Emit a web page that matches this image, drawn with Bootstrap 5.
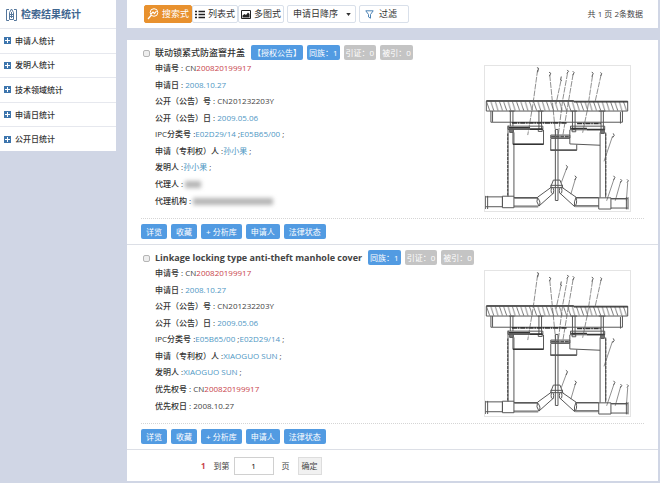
<!DOCTYPE html>
<html lang="zh-CN">
<head>
<meta charset="utf-8">
<meta name="viewport" content="width=device-width, initial-scale=1">
<title>检索结果统计</title>
<link href="https://cdn.jsdelivr.net/npm/bootstrap@5.3.0/dist/css/bootstrap.min.css" rel="stylesheet">
<style>
  body { background: #d0d6e5; color: #444; font: 8px/16px "Open Sans", "Noto Sans CJK SC", sans-serif; }
  a { color: #4f97c4; text-decoration: none; }
  .sidebar { width: 116px; }
  .sidebar-head { height: 28px; font-size: 10px; line-height: 16px; color: #3f6690; padding-left: 6px; gap: 4px; }
  .stat-list { min-height: 123px; }
  .stat-list li { border-top: 1px solid #e6e8ee; }
  .stat-list a { color: #333; padding-left: 4px; gap: 4px; font-weight: 500; }
  .main-col { padding: 0 2px 0 11px; min-width: 0; }
  .toolbar { height: 28px; padding: 0 15px 0 17px; margin-bottom: 12px; gap: 3px; }
  .tool { font-size: 9px; line-height: 16px; height: 18px; padding: 0 2px; gap: 3px; color: #333; background: #fff; border: 1px solid #d9e0ea; border-radius: 2px; }
  .tool-on { background: #e8912e; border-color: #e8912e; color: #fff; }
  .sort { width: 69px; padding: 0 5px; appearance: none; background: #fff url("data:image/svg+xml,%3Csvg xmlns='http://www.w3.org/2000/svg' viewBox='0 0 6 4'%3E%3Cpath d='M0 0h6L3 4z' fill='%23333'/%3E%3C/svg%3E") no-repeat right 4px center / 5px 3px; }
  .filter { width: 50px; padding: 0 5px; gap: 5px; }
  .record { padding: 5px 14px; border-bottom: 1px solid #dcdfe6; }
  .record-head { height: 15px; gap: 4px; }
  .record-head input { width: 7px; height: 7px; margin: 1px 1px 0 2px; border: 1px solid #b5b5b5; border-radius: 1px; background-color: #eee; flex: none; }
  .record-head label { font-size: 9px; line-height: 15px; font-weight: 500; color: #333; margin-right: 2px; }
  .record-head label[lang] { font-weight: 700; color: #444; }
  .tag { height: 15px; line-height: 15px; padding: 0 2px; border-radius: 2px; color: #fff; background: #529be2; white-space: nowrap; }
  .tag-off { background: #c4c4c4; }
  .fields { min-height: 149px; padding-left: 14px; }
  .fields b { font-weight: 500; color: #333; }
  .num { color: #c8434b; }
  .hidden-name { display: inline-block; height: 7px; width: 16px; background: #b5b5b5; filter: blur(2px); vertical-align: middle; }
  .hidden-firm { width: 80px; }
  .figure-box { width: 147px; height: 147px; margin-top: 5px; border: 1px solid #e4e4e4; flex: none; }
  .figure-wrap { padding-right: 13px; }
  .actions { margin-top: 6px; padding-top: 5px; border-top: 1px dotted #d5d5d5; gap: 4px; }
  .act { height: 15px; font-size: 8px; line-height: 15px; padding: 0 5px; border: 0; border-radius: 2px; color: #fff; background: #529be2; }
  .pager { height: 31px; padding-left: 74px; }
  .page-no { width: 40px; height: 18px; font-size: 8px; border: 1px solid #d0d0d0; padding: 0; }
  .go { height: 18px; font-size: 8px; line-height: 16px; padding: 0 3px; border: 1px solid #ddd; background: #f1f1f1; color: #444; }
</style>
</head>
<body>
<svg class="position-absolute" width="0" height="0" aria-hidden="true">
  <defs>
    <pattern id="hatch" width="13" height="30" patternUnits="userSpaceOnUse" x="34" y="122">
      <path d="M1 1L10 29M14 1L23 29M-12 1L-3 29" stroke="#555" stroke-width="2.4"/>
    </pattern>
  </defs>
  <symbol id="plus" viewBox="0 0 7 7"><path fill="#3d75ad" d="M0 0h7v7H0z"/><path stroke="#fff" d="M1 3.5h5M3.5 1v5"/></symbol>
  <symbol id="manhole" viewBox="30 15 441 441">
    <g fill="none" stroke="#555" stroke-width="3">
      <path d="M34 122H464V152H34Z" fill="url(#hatch)"/>
      <path d="M34 121H300M300 124H464" stroke="#333" stroke-width="4"/>
      <path d="M48 152V186H448V152M53 152V185M442 155V190M103 152H120M190 152H208M290 152H310M376 152H396" />
      <path d="M107 152V198M115 152V198M194 152V210M202 152V210M296 152V210M304 152V210M383 152V215M390 152V215"/>
      <path d="M112 188H280M310 190H382" stroke="#333" stroke-width="5" stroke-dasharray="16 2 5 2"/>
      <path d="M100 198H206V208H100ZM290 198H394V209H290ZM192 207H204V214H192ZM295 208H306V215H295Z"/>
      <path d="M102 203H167M167 207H205M292 205H340M340 208H394" stroke="#333" stroke-width="5"/>
      <path d="M115 209V253H208V209M288 209V252L380 256M100 196V412M118 217V412M380 217V415M397 217V415"/>
      <path d="M105 207H116V217H105ZM382 210H393V220H382Z" fill="#777"/>
      <path d="M99 220V412M397 220V412" stroke-width="4" stroke-dasharray="9 3"/>
      <path d="M115 253H208M229 271H309" stroke="#333" stroke-width="4"/>
      <path d="M230 236V271H309V254M230 225H288V234H230ZM288 235H230"/>
      <path d="M231 230H286" stroke-width="5" stroke-dasharray="12 2"/>
      <path d="M244 208H252V424H244ZM229 385L238 362H258L267 385ZM229 378H267"/>
      <path d="M234 382L190 414M240 400L194 441M190 414Q184 428 194 441Q202 430 190 416M261 382L307 414M256 400L302 442M307 414Q300 428 302 442Q312 436 307 414"/>
      <ellipse cx="235" cy="394" rx="4" ry="9"/><ellipse cx="260" cy="394" rx="4" ry="9"/>
      <path d="M31 410V450M38 410V450M32 413H83V443H32M83 411H118V446H83ZM118 415H190M118 441H192M307 415H376M304 440H376M376 416H413V450H376ZM413 418H464M413 447H464M460 414V451M465 414V451"/>
      <path d="M119 418H190M308 417H376M414 420H463M118 444H192M304 443H376" stroke-width="2"/>
      <path d="M190 27L176 130L160 225M227 43L245 225M261 60L246 130M281 37L266 120L253 225M298 40L281 140L267 225M357 45L342 145L327 218M383 42L365 123" stroke-width="2" stroke-dasharray="18 3"/>
      <path d="M418 228L392 305M278 327L262 370M305 358L291 405M422 360L400 425M443 365L426 425M464 370L460 425" stroke-width="2"/>
      <path d="M188 20L193 22L190 34M225 34L230 37L226 46M262 47L260 58L264 59M280 27L284 31L279 38M297 31L301 35L297 43M355 33L359 38L355 47M381 35L385 38L382 45M420 220L423 226L418 233M276 317L281 321L277 331M303 349L308 353L303 362M421 349L425 354L421 362M442 359L446 363L442 370M462 360L466 364L462 370" stroke="#555" stroke-width="3"/>
    </g>
  </symbol>
</svg>
<div class="d-flex align-items-start">
  <aside class="sidebar bg-white flex-shrink-0">
    <h1 class="sidebar-head d-flex align-items-center mb-0 fw-bold">
      <svg width="11" height="13" viewBox="0 0 11 13" fill="none" stroke="#55779c" aria-hidden="true"><path d="M3 1.5H.5v11H3M8 1.5h2.500v11H8M3.500 4.500L5.500 1l2 3.500v7h-4zM3.500 6.500h4M3.500 8.500h4M5.500 4v6"/></svg>
      检索结果统计
    </h1>
    <ul class="stat-list list-unstyled d-flex flex-column mb-0">
      <li class="d-flex flex-fill"><a href="#" class="d-flex align-items-center"><svg width="7" height="7" aria-hidden="true"><use href="#plus"/></svg>申请人统计</a></li>
      <li class="d-flex flex-fill"><a href="#" class="d-flex align-items-center"><svg width="7" height="7" aria-hidden="true"><use href="#plus"/></svg>发明人统计</a></li>
      <li class="d-flex flex-fill"><a href="#" class="d-flex align-items-center"><svg width="7" height="7" aria-hidden="true"><use href="#plus"/></svg>技术领域统计</a></li>
      <li class="d-flex flex-fill"><a href="#" class="d-flex align-items-center"><svg width="7" height="7" aria-hidden="true"><use href="#plus"/></svg>申请日统计</a></li>
      <li class="d-flex flex-fill"><a href="#" class="d-flex align-items-center"><svg width="7" height="7" aria-hidden="true"><use href="#plus"/></svg>公开日统计</a></li>
    </ul>
  </aside>
  <main class="main-col flex-grow-1">
    <div class="toolbar bg-white d-flex align-items-center">
      <div class="d-flex">
        <button type="button" class="tool tool-on d-flex align-items-center"><svg width="12" height="12" viewBox="0 0 12 12" fill="none" stroke="#fff" aria-hidden="true"><circle cx="7" cy="4.500" r="3.800"/><path d="M4.500 7L1 11M4 6l2-2 1.500 1.500L9.500 3" stroke-width="1.200"/></svg>搜索式</button>
        <button type="button" class="tool d-flex align-items-center"><svg width="10" height="9" viewBox="0 0 10 9" stroke="#222" stroke-width="1.400" aria-hidden="true"><path d="M0 1.500h2M3.500 1.500H10M0 4.500h2M3.500 4.500H10M0 7.500h2M3.500 7.500H10"/></svg>列表式</button>
        <button type="button" class="tool d-flex align-items-center"><svg width="10" height="9" viewBox="0 0 10 9" aria-hidden="true"><path d="M.5.5h9v8h-9z" fill="#fff" stroke="#222"/><path d="M1.500 7.500V5.500L3.500 4l1.500 1 2-2.500 1.500 1.500v3.500z" fill="#222"/></svg>多图式</button>
      </div>
      <select class="tool sort" aria-label="排序方式"><option>申请日降序</option></select>
      <button type="button" class="tool filter d-flex align-items-center"><svg width="9" height="9" viewBox="0 0 9 9" fill="none" stroke="#4c83b5" aria-hidden="true"><path d="M.8.8h7.400L5.500 4.500v3.700l-2-1.200V4.500z"/></svg>过滤</button>
      <span class="ms-auto text-nowrap">共 1 页 2条数据</span>
    </div>

    <section class="bg-white">
      <article class="record">
        <div class="record-head d-flex align-items-center">
          <input type="checkbox" class="form-check-input" id="rec1">
          <label for="rec1">联动锁紧式防盗窨井盖</label>
          <span class="tag">【授权公告】</span><span class="tag">同族：1</span><span class="tag tag-off">引证：0</span><span class="tag tag-off">被引：0</span>
        </div>
        <div class="figure-wrap d-flex justify-content-between align-items-start">
          <ul class="fields list-unstyled d-flex flex-column mb-0">
            <li class="flex-fill"><b>申请号 :</b> CN<span class="num">200820199917</span></li>
            <li class="flex-fill"><b>申请日 :</b> <a href="#">2008.10.27</a></li>
            <li class="flex-fill"><b>公开（公告）号 :</b> CN201232203Y</li>
            <li class="flex-fill"><b>公开（公告）日 :</b> <a href="#">2009.05.06</a></li>
            <li class="flex-fill"><b>IPC分类号 :</b><a href="#">E02D29/14</a> ;<a href="#">E05B65/00</a> ;</li>
            <li class="flex-fill"><b>申请（专利权）人 :</b><a href="#">孙小果</a> ;</li>
            <li class="flex-fill"><b>发明人 :</b><a href="#">孙小果</a> ;</li>
            <li class="flex-fill"><b>代理人 :</b> <span class="hidden-name"></span></li>
            <li class="flex-fill"><b>代理机构 :</b> <span class="hidden-name hidden-firm"></span></li>
          </ul>
          <svg class="figure-box" role="img" aria-label="井盖结构图"><use href="#manhole"/></svg>
        </div>
        <div class="actions d-flex">
          <button type="button" class="act">详览</button><button type="button" class="act">收藏</button><button type="button" class="act">+ 分析库</button><button type="button" class="act">申请人</button><button type="button" class="act">法律状态</button>
        </div>
      </article>
      <article class="record">
        <div class="record-head d-flex align-items-center">
          <input type="checkbox" class="form-check-input" id="rec2">
          <label for="rec2" lang="en">Linkage locking type anti-theft manhole cover</label>
          <span class="tag">同族：1</span><span class="tag tag-off">引证：0</span><span class="tag tag-off">被引：0</span>
        </div>
        <div class="figure-wrap d-flex justify-content-between align-items-start">
          <ul class="fields list-unstyled d-flex flex-column mb-0">
            <li class="flex-fill"><b>申请号 :</b> CN<span class="num">200820199917</span></li>
            <li class="flex-fill"><b>申请日 :</b> <a href="#">2008.10.27</a></li>
            <li class="flex-fill"><b>公开（公告）号 :</b> CN201232203Y</li>
            <li class="flex-fill"><b>公开（公告）日 :</b> <a href="#">2009.05.06</a></li>
            <li class="flex-fill"><b>IPC分类号 :</b><a href="#">E05B65/00</a> ;<a href="#">E02D29/14</a> ;</li>
            <li class="flex-fill"><b>申请（专利权）人 :</b><a href="#">XIAOGUO SUN</a> ;</li>
            <li class="flex-fill"><b>发明人 :</b><a href="#">XIAOGUO SUN</a> ;</li>
            <li class="flex-fill"><b>优先权号 :</b> CN<span class="num">200820199917</span></li>
            <li class="flex-fill"><b>优先权日 :</b> 2008.10.27</li>
          </ul>
          <svg class="figure-box" role="img" aria-label="井盖结构图"><use href="#manhole"/></svg>
        </div>
        <div class="actions d-flex">
          <button type="button" class="act">详览</button><button type="button" class="act">收藏</button><button type="button" class="act">+ 分析库</button><button type="button" class="act">申请人</button><button type="button" class="act">法律状态</button>
        </div>
      </article>
      <form class="pager d-flex align-items-center">
        <b class="num me-2">1</b>
        <label for="pageNo" class="me-1">到第</label>
        <input id="pageNo" class="page-no text-center" type="text" value="1">
        <span class="mx-2">页</span>
        <button type="button" class="go">确定</button>
      </form>
    </section>
  </main>
</div>
<script src="https://cdn.jsdelivr.net/npm/bootstrap@5.3.0/dist/js/bootstrap.bundle.min.js"></script>
</body>
</html>
